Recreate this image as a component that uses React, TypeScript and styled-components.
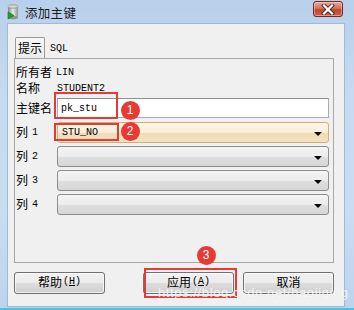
import React from "react";
import styled, { createGlobalStyle } from "styled-components";

const GlobalStyle = createGlobalStyle`
  html, body {
    margin: 0;
    padding: 0;
    background: #c4d9ef;
  }
  body {
    width: 354px;
    height: 310px;
    overflow: hidden;
  }
`;

const CN = `"Noto Sans CJK SC", "Liberation Sans", sans-serif`;
const MONO = `"Liberation Mono", "Noto Sans CJK SC", monospace`;

const Window = styled.div`
  position: relative;
  width: 354px;
  height: 310px;
  box-sizing: border-box;
  display: flex;
  flex-direction: column;
  background: linear-gradient(180deg, #b8d0eb 0%, #c6daf1 30%, #c9dcf2 70%, #bdd4ee 100%);
  border-bottom: 2px solid #48c2e6;
  font-family: ${CN};
  font-size: 12px;
  line-height: 14px;
  color: #000;
`;

const TitleBar = styled.div`
  height: 24px;
  display: flex;
  align-items: center;
  padding: 0 11px 0 5px;
  gap: 4px;
`;

const Title = styled.span`
  flex: 1;
  font-size: 12.5px;
  color: #1a1a1a;
  letter-spacing: 0.3px;
  margin-top: 1px;
`;

const CloseButton = styled.div`
  width: 30px;
  height: 16px;
  margin-top: -6px;
  box-sizing: border-box;
  border: 1px solid #6e2b22;
  border-radius: 3px;
  background: linear-gradient(180deg, #e8a898 0%, #d4735f 45%, #c2432b 55%, #d0634a 100%);
  display: flex;
  align-items: center;
  justify-content: center;
  box-shadow: inset 0 0 0 1px rgba(255, 255, 255, 0.35);
`;

const Client = styled.div`
  flex: 1;
  margin: 0 10px 2px 8px;
  background: #f0f0f0;
  box-shadow: 0 0 0 1px #a3b9d2;
  display: flex;
  flex-direction: column;
  padding: 13px 10px 0 6px;
`;

const TabBar = styled.div`
  height: 21px;
  display: flex;
  align-items: flex-end;
  padding-left: 1px;
`;

const Tab = styled.div<{ $active?: boolean }>`
  height: ${(p) => (p.$active ? "21px" : "19px")};
  box-sizing: border-box;
  padding: 0 ${(p) => (p.$active ? "2px" : "4px")};
  display: flex;
  align-items: center;
  border: ${(p) => (p.$active ? "1px solid #9a9a9a" : "1px solid transparent")};
  border-bottom: none;
  border-radius: 2px 2px 0 0;
  background: ${(p) => (p.$active ? "linear-gradient(#f7f7f7, #ececec)" : "transparent")};
  font-family: ${(p) => (p.$active ? CN : MONO)};
  font-size: ${(p) => (p.$active ? "12px" : "10px")};
`;

const Panel = styled.div`
  height: 205px;
  box-sizing: border-box;
  border: 1px solid #a8a8a8;
  background: #f0f0f0;
  padding: 5px 4px 0 1px;
  display: flex;
  flex-direction: column;
`;

const InfoRow = styled.div`
  height: 16px;
  display: flex;
  align-items: center;
`;

const FieldRow = styled.div`
  height: 24px;
  display: flex;
  align-items: center;
`;

const Label = styled.span<{ $width?: number }>`
  width: ${(p) => (p.$width ? `${p.$width}px` : "auto")};
  flex-shrink: 0;
  display: flex;
  align-items: center;
  gap: 4px;
  height: 14px;
`;

const Mono = styled.span`
  font-family: ${MONO};
  font-size: 10px;
  line-height: 14px;
  padding-top: 1px;
`;

const TextInput = styled.div`
  flex: 1;
  height: 20px;
  box-sizing: border-box;
  border: 1px solid #a9abb2;
  border-top-color: #8e9096;
  background: #fff;
  display: flex;
  align-items: center;
  padding: 2px 0 0 3px;
  font-family: ${MONO};
  font-size: 10px;
`;

const Combo = styled.div<{ $hot?: boolean }>`
  flex: 1;
  height: 21px;
  box-sizing: border-box;
  border: 1px solid ${(p) => (p.$hot ? "#d3b06f" : "#8d8d8d")};
  border-radius: 3px;
  background: ${(p) =>
    p.$hot
      ? "linear-gradient(180deg, #fdf6ea 0%, #f8ecd6 50%, #efdcb6 51%, #f2e2c2 100%)"
      : "linear-gradient(180deg, #f4f4f4 0%, #ececec 50%, #dfdfdf 51%, #d7d7d7 100%)"};
  display: flex;
  align-items: center;
  padding: 1px 6px 0 4px;
  font-family: ${MONO};
  font-size: 10px;
`;

const ComboText = styled.span`
  flex: 1;
`;

const Arrow = styled.span`
  width: 0;
  height: 0;
  border-left: 4px solid transparent;
  border-right: 4px solid transparent;
  border-top: 4px solid #000;
  margin-top: 2px;
`;

const ButtonRow = styled.div`
  margin-top: 9px;
  display: flex;
  gap: 9px;
`;

const Button = styled.div<{ $push?: boolean }>`
  width: 91px;
  height: 22px;
  box-sizing: border-box;
  margin-left: ${(p) => (p.$push ? "auto" : "0")};
  border: 1px solid #707070;
  border-radius: 3px;
  background: linear-gradient(180deg, #f2f2f2 0%, #ebebeb 50%, #dddddd 51%, #cfcfcf 100%);
  box-shadow: inset 0 0 0 1px rgba(255, 255, 255, 0.7);
  display: flex;
  align-items: center;
  justify-content: center;
  font-size: 12px;
  padding-bottom: 2px;
`;

const Key = styled.span`
  font-family: ${MONO};
  font-size: 10px;
  margin-left: 1px;
`;

const Under = styled.span`
  text-decoration: underline;
`;

const RedBox = styled.div`
  position: absolute;
  box-sizing: border-box;
  border: 2px solid #e53a36;
  pointer-events: none;
`;

const Badge = styled.div`
  position: absolute;
  width: 19px;
  height: 19px;
  margin: -9.5px 0 0 -9.5px;
  border-radius: 50%;
  background: #e83a35;
  color: #fff;
  font-family: "Liberation Sans", sans-serif;
  font-size: 12px;
  display: flex;
  align-items: center;
  justify-content: center;
`;

const Watermark = styled.div`
  position: absolute;
  left: 158px;
  top: 287px;
  font-family: "Liberation Sans", sans-serif;
  font-size: 13px;
  line-height: 12px;
  letter-spacing: 0.6px;
  color: rgba(255, 255, 255, 0.75);
  text-shadow: 0 0 1px rgba(200, 200, 200, 0.4);
  pointer-events: none;
`;

function TitleIcon() {
  return (
    <svg width="16" height="16" viewBox="0 0 16 16">
      <defs>
        <linearGradient id="cyl" x1="0" x2="1">
          <stop offset="0" stopColor="#7d8a83" />
          <stop offset="0.5" stopColor="#e6ece8" />
          <stop offset="1" stopColor="#8b978f" />
        </linearGradient>
      </defs>
      <rect x="3" y="2.5" width="10" height="11" fill="url(#cyl)" />
      <ellipse cx="8" cy="2.5" rx="5" ry="1.8" fill="#cfd8d2" stroke="#7b8680" strokeWidth="0.6" />
      <ellipse cx="8" cy="13.5" rx="5" ry="1.8" fill="#8b978f" />
      <path d="M3 8 L9 11.5 L3 15 Z" fill="#1ea02a" stroke="#0d6e17" strokeWidth="0.6" />
    </svg>
  );
}

function CloseGlyph() {
  return (
    <svg width="14" height="11" viewBox="0 0 14 11">
      <path d="M3 1.5 L11 9.5 M11 1.5 L3 9.5" stroke="#4a2a24" strokeWidth="4" strokeLinecap="square" />
      <path d="M3 1.5 L11 9.5 M11 1.5 L3 9.5" stroke="#fff" strokeWidth="2.2" strokeLinecap="square" />
    </svg>
  );
}

const columns = ["1", "2", "3", "4"];

export default function App() {
  return (
    <Window>
      <GlobalStyle />
      <TitleBar>
        <TitleIcon />
        <Title>添加主键</Title>
        <CloseButton>
          <CloseGlyph />
        </CloseButton>
      </TitleBar>
      <Client>
        <TabBar>
          <Tab $active>提示</Tab>
          <Tab>SQL</Tab>
        </TabBar>
        <Panel>
          <InfoRow>
            <Label>
              <span>所有者</span>
              <Mono>LIN</Mono>
            </Label>
          </InfoRow>
          <InfoRow>
            <Label $width={41}>名称</Label>
            <Mono>STUDENT2</Mono>
          </InfoRow>
          <FieldRow>
            <Label $width={41}>主键名</Label>
            <TextInput>pk_stu</TextInput>
          </FieldRow>
          {columns.map((n, i) => (
            <FieldRow key={n}>
              <Label $width={41}>
                <span>列</span>
                <Mono>{n}</Mono>
              </Label>
              <Combo $hot={i === 0}>
                <ComboText>{i === 0 ? "STU_NO" : ""}</ComboText>
                <Arrow />
              </Combo>
            </FieldRow>
          ))}
        </Panel>
        <ButtonRow>
          <Button>
            帮助<Key>(<Under>H</Under>)</Key>
          </Button>
          <Button $push>
            应用<Key>(<Under>A</Under>)</Key>
          </Button>
          <Button>取消</Button>
        </ButtonRow>
      </Client>

      <RedBox style={{ left: 54, top: 92, width: 64, height: 27 }} />
      <Badge style={{ left: 130, top: 110 }}>1</Badge>
      <RedBox style={{ left: 54, top: 123, width: 65, height: 18 }} />
      <Badge style={{ left: 130, top: 131 }}>2</Badge>
      <RedBox style={{ left: 144, top: 268, width: 93, height: 30 }} />
      <Badge style={{ left: 206, top: 255 }}>3</Badge>
      <Watermark>https://blog.csdn.net/haojiqing</Watermark>
    </Window>
  );
}
